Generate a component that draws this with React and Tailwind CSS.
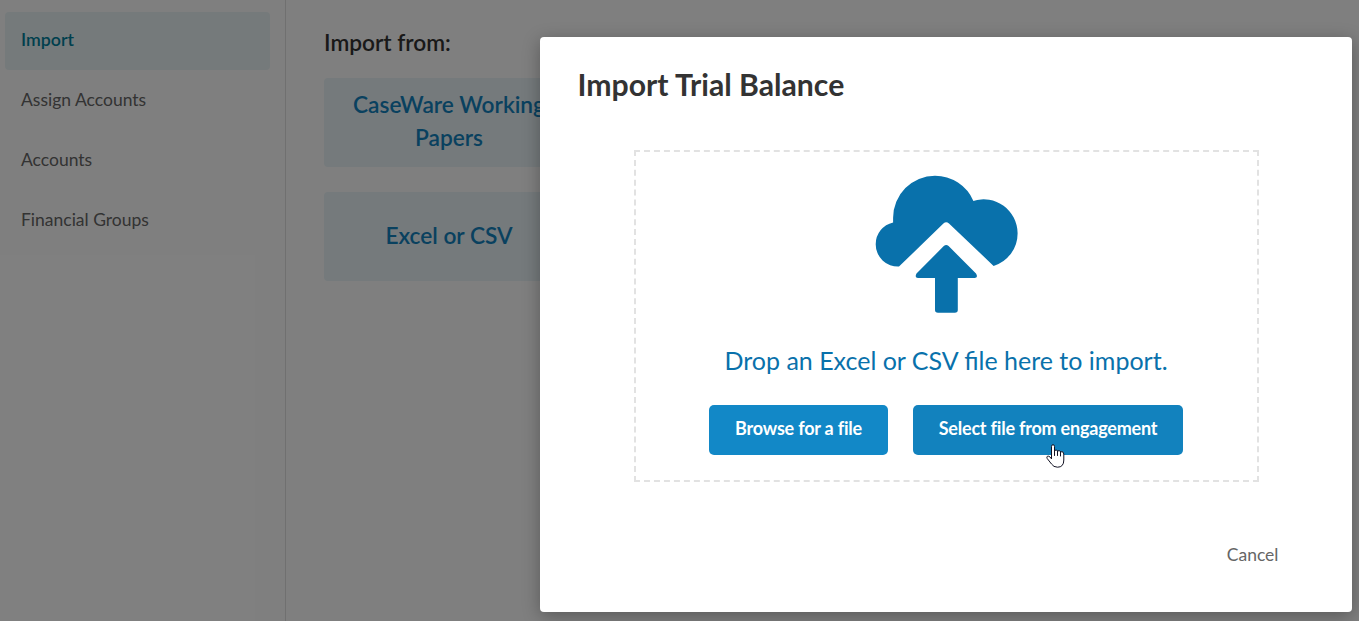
const navItems = ["Import", "Assign Accounts", "Accounts", "Financial Groups"];

function Sidebar() {
  return (
    <nav className="flex w-[286px] shrink-0 flex-col gap-0.5 border-r border-[#e0e0e0] pt-3 pr-[15px] pl-[5px]">
      {navItems.map((item, i) => (
        <a
          key={item}
          className={
            i === 0
              ? "flex h-[58px] items-center rounded bg-[#ebf4f6] pb-1 pl-4 text-[17.8px] font-semibold text-[#00809c]"
              : "flex h-[58px] items-center pb-0.5 pl-4 text-[17.5px] text-[#666666]"
          }
        >
          {item}
        </a>
      ))}
    </nav>
  );
}

function ImportSources() {
  return (
    <main className="flex flex-1 flex-col items-start pt-[27px] pl-[38px]">
      <h2 className="h-[51px] text-[22.7px] leading-8 font-semibold text-[#333333]">Import from:</h2>
      <div className="flex w-[250px] flex-col gap-[25px] text-center text-[22.7px] leading-[33px] font-semibold text-[#1282be]">
        <button className="h-[89px] rounded bg-[#eaf4f9] px-5 pb-1">CaseWare Working Papers</button>
        <button className="h-[89px] rounded bg-[#eaf4f9] px-5 pb-0.5">Excel or CSV</button>
      </div>
    </main>
  );
}

function CloudUpload() {
  return (
    <svg className="h-[139px] w-[144px]" viewBox="875 175 144 139" fill="#0971ab">
      <path d="M899 266.6A22.3 22.3 0 0 1 875.7 244.3A22.3 22.3 0 0 1 893.1 222.4V217.7A42 42 0 0 1 935 175.7A42 42 0 0 1 973.4 200.9A34 34 0 0 1 1017.6 233A34 34 0 0 1 993.6 265.9L949 223.5Q946.2 221.2 943.4 223.5Z" />
      <path d="M943.8 246Q946.2 243.8 948.6 246L976 273.6Q978.5 277.8 974.5 278H957.8V310Q957.8 312.7 954.8 312.7H938Q935 312.7 935 310V278H918Q914.3 277.8 916.5 273.6Z" />
    </svg>
  );
}

function HandCursor() {
  return (
    <svg className="absolute top-[39px] left-[133px] h-6 w-[19px]" viewBox="0 0 19 24" fill="#fff" stroke="#111122" strokeWidth="1" strokeLinejoin="round" strokeLinecap="round">
      <path d="M5.5 14.5V2.5Q5.5.7 7 .7T8.5 2.5V6.5Q10.5 5.4 11.5 7Q13.5 6 14.5 7.7Q17.8 7 17.8 10V16Q17.8 23.2 11.5 23.2Q7.5 23.2 5.5 20L1.2 14.5Q.3 12.8 1.5 12.2Q2.7 11.8 3.8 12.8Z" />
      <path d="M8.5 6.5V11.5M11.5 7V11.5M14.5 7.7V12" fill="none" />
    </svg>
  );
}

function ImportDialog() {
  return (
    <section className="flex h-[575px] w-[812px] flex-col rounded bg-white pt-[30px] shadow-[0_4px_18px_rgba(0,0,0,0.3)]">
      <h1 className="ml-[37.5px] h-[83px] text-[30.2px] leading-[35px] font-bold text-[#333333]">Import Trial Balance</h1>
      <div className="ml-[94px] flex h-[332px] w-[625px] flex-col items-center border-2 border-dashed border-[#e2e2e2] pt-[23px]">
        <CloudUpload />
        <p className="mt-7 mr-px text-[25px] leading-9 whitespace-nowrap text-[#0971ab]">
          Drop an Excel or CSV file here to import.
        </p>
        <div className="mt-[27px] mr-px flex gap-[25px]">
          <button className="h-[50px] w-[179px] rounded-[5px] bg-[#1288c7] pb-1 text-[18px] font-bold tracking-[-0.21px] text-white">
            Browse for a file
          </button>
          <button className="relative h-[50px] w-[270px] rounded-[5px] bg-[#1282be] pb-1 text-[18px] font-bold tracking-[-0.21px] text-white">
            Select file from engagement
            <HandCursor />
          </button>
        </div>
      </div>
      <button className="mt-[60px] mr-[73.5px] self-end text-[17.5px] leading-[26px] text-[#666666]">Cancel</button>
    </section>
  );
}

export default function App() {
  return (
    <div className="relative flex h-[621px] w-[1359px] overflow-hidden bg-white font-['Lato','Noto_Sans',sans-serif]">
      <Sidebar />
      <ImportSources />
      <div className="absolute inset-0 flex items-start justify-end bg-black/50 pt-[37px] pr-[7px]">
        <ImportDialog />
      </div>
    </div>
  );
}
